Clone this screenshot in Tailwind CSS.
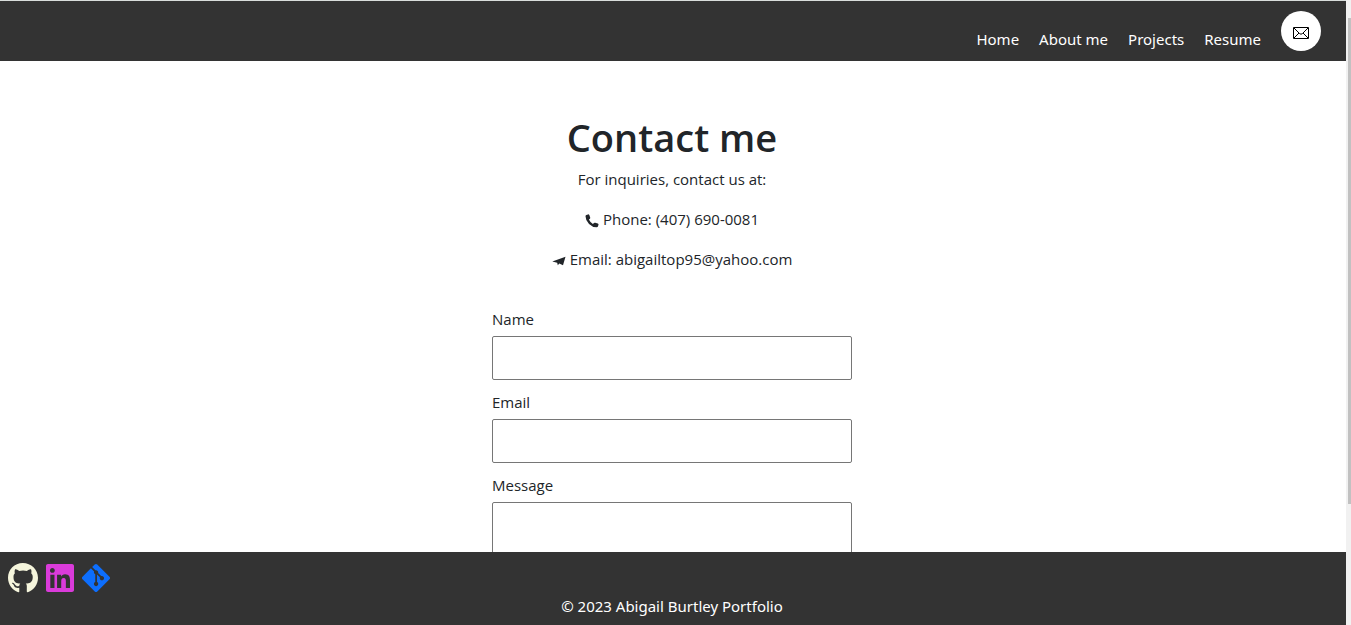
<!DOCTYPE html>
<html lang="en">
<head>
<meta charset="utf-8">
<meta name="viewport" content="width=device-width, initial-scale=1">
<title>Contact me</title>
<script src="https://cdn.jsdelivr.net/npm/@tailwindcss/browser@4"></script>
</head>
<body class="flex h-screen overflow-hidden bg-white text-[15px] leading-6 text-[#212529] font-['Noto_Sans','Open_Sans',sans-serif]">
<div class="flex min-w-0 flex-1 flex-col">
  <header class="flex h-[61px] shrink-0 items-start justify-end border-t border-[#d9dedc] bg-[#333] pr-[25px] pt-[10px] text-white">
    <nav class="flex gap-5">
      <a href="#" class="mt-4">Home</a>
      <a href="#" class="mt-4">About me</a>
      <a href="#" class="mt-4">Projects</a>
      <a href="#" class="mt-4">Resume</a>
      <a href="#" aria-label="Contact" class="flex size-10 items-center justify-center rounded-full bg-white pt-1 text-black">
        <svg class="h-3 w-4" viewBox="0 0 16 12" fill="none" stroke="currentColor" stroke-width="1"><path d="M.5.5h15v11H.5zM1 1l5.500 5.500Q8 8 9.500 6.500L15 1M1 11l5-5M15 11l-5-5"/></svg>
      </a>
    </nav>
  </header>
  <main class="min-h-0 flex-1 overflow-hidden pr-[2px] pt-[52px]">
    <section class="text-center font-['Open_Sans',sans-serif]">
      <h1 class="mb-1.5 text-[38px] leading-12 font-semibold">Contact me</h1>
      <p class="mb-4">For inquiries, contact us at:</p>
      <p class="mb-4 flex items-center justify-center gap-1">
        <svg class="mt-1 size-[14px]" viewBox="0 0 14 14" fill="currentColor"><path d="M1.300 1.100 3 .4Q3.900.2 4.300 1L5.200 3.500Q5.400 4.200 4.900 4.700L3.900 5.500Q5 8.100 7.900 9.900L9 8.900Q9.500 8.500 10.200 8.700L12.800 9.600Q13.700 9.900 13.500 10.800L12.900 12.500Q12.600 13.300 11.700 13.300 7.500 13.300 4 9.900.5 6.300.5 2.200.5 1.400 1.300 1.100z"/></svg>
        Phone: (407) 690-0081
      </p>
      <p class="flex items-center justify-center gap-1">
        <svg class="mt-1 h-[10px] w-[14px]" viewBox="0 0 14 10" fill="currentColor"><path d="M.3 5.500 13.500.7 11 9.300 7.300 7.500 5.800 9.300 5.200 6.800z"/></svg>
        Email: abigailtop95@yahoo.com
      </p>
    </section>
    <form class="mx-auto mt-9 flex w-[360px] max-w-full flex-col font-['Open_Sans',sans-serif]">
      <label for="name" class="mb-[5px]">Name</label>
      <input id="name" type="text" class="mb-[10px] h-11 rounded-xs border border-[#767676] px-2">
      <label for="email" class="mb-[5px]">Email</label>
      <input id="email" type="email" class="mb-[10px] h-11 rounded-xs border border-[#767676] px-2">
      <label for="message" class="mb-[5px]">Message</label>
      <textarea id="message" class="h-[120px] resize-none rounded-xs border border-[#767676] p-2"></textarea>
    </form>
  </main>
  <footer class="h-[73px] shrink-0 bg-[#333] pr-[2px] pt-[10px] text-white">
    <div class="flex h-8 items-center gap-2 pl-2">
      <a href="#" aria-label="GitHub" class="text-[#f5f5dc]"><svg class="h-8 w-[30px]" viewBox="0 0 496 512" fill="currentColor"><path d="M165.9 397.4c0 2-2.3 3.6-5.2 3.6-3.3.3-5.6-1.3-5.6-3.6 0-2 2.3-3.6 5.2-3.6 3-.3 5.6 1.3 5.6 3.6zm-31.1-4.5c-.7 2 1.3 4.3 4.3 4.9 2.6 1 5.6 0 6.2-2s-1.3-4.3-4.3-5.2c-2.6-.7-5.5.3-6.2 2.3zm44.2-1.7c-2.9.7-4.9 2.6-4.6 4.9.3 2 2.9 3.3 5.9 2.6 2.9-.7 4.9-2.6 4.6-4.6-.3-1.9-3-3.2-5.9-2.9zM244.8 8C106.1 8 0 113.3 0 252c0 110.9 69.8 205.8 169.5 239.2 12.8 2.3 17.3-5.6 17.3-12.1 0-6.2-.3-40.4-.3-61.4 0 0-70 15-84.7-29.8 0 0-11.4-29.1-27.8-36.6 0 0-22.9-15.7 1.6-15.4 0 0 24.9 2 38.6 25.8 21.9 38.6 58.6 27.5 72.9 20.9 2.3-16 8.8-27.1 16-33.7-55.9-6.2-112.3-14.3-112.3-110.5 0-27.5 7.6-41.3 23.6-58.9-2.6-6.5-11.1-33.3 2.6-67.9 20.9-6.5 69 27 69 27 20-5.6 41.5-8.5 62.8-8.5s42.8 2.9 62.8 8.5c0 0 48.1-33.6 69-27 13.7 34.7 5.2 61.4 2.6 67.9 16 17.7 25.8 31.5 25.8 58.9 0 96.5-58.9 104.2-114.8 110.5 9.2 7.9 17 22.9 17 46.4 0 33.7-.3 75.4-.3 83.6 0 6.5 4.6 14.4 17.3 12.1C428.2 457.8 496 362.9 496 252 496 113.3 383.5 8 244.8 8z"/></svg></a>
      <a href="#" aria-label="LinkedIn" class="text-[#da3bda]"><svg class="h-8 w-7" viewBox="0 0 448 512" fill="currentColor"><path d="M416 32H31.9C14.3 32 0 46.5 0 64.3v383.4C0 465.5 14.3 480 31.9 480H416c17.6 0 32-14.5 32-32.3V64.3c0-17.8-14.4-32.3-32-32.3zM135.4 416H69V202.2h66.5V416zm-33.2-243c-21.3 0-38.5-17.3-38.5-38.5S80.9 96 102.2 96c21.2 0 38.5 17.3 38.5 38.5 0 21.3-17.2 38.5-38.5 38.5zm282.1 243h-66.4V312c0-24.8-.5-56.7-34.5-56.7-34.6 0-39.9 27-39.9 54.9V416h-66.4V202.2h63.7v29.2h.9c8.9-16.8 30.6-34.5 62.9-34.5 67.2 0 79.7 44.3 79.7 101.9V416z"/></svg></a>
      <a href="#" aria-label="Git" class="text-[#0d6efd]"><svg class="h-8 w-7" viewBox="0 0 448 512" fill="currentColor"><path d="M439.55 236.05L244 40.45a28.87 28.87 0 0 0-40.81 0l-40.66 40.63 51.52 51.52c27.06-9.14 52.68 16.77 43.39 43.68l49.66 49.66c34.23-11.8 61.18 31 35.47 56.69-26.49 26.49-70.21-2.87-56-37.34L240.22 199v121.85c25.3 12.54 22.26 41.85 9.08 55a34.34 34.34 0 0 1-48.55 0c-17.57-17.6-11.07-46.91 11.25-56v-123c-20.8-8.51-24.6-30.74-18.64-45L142.57 101 8.45 235.14a28.86 28.86 0 0 0 0 40.81l195.61 195.6a28.86 28.86 0 0 0 40.8 0l194.69-194.69a28.86 28.86 0 0 0 0-40.81z"/></svg></a>
    </div>
    <p class="text-center">© 2023 Abigail Burtley Portfolio</p>
  </footer>
</div>
<!-- Scrollbar -->
<div class="flex w-[5px] shrink-0 flex-col bg-[#f1f1f1] pl-[2px] pt-[18px]" aria-hidden="true">
  <div class="h-4/5 bg-[#c1c1c1]"></div>
</div>
</body>
</html>
